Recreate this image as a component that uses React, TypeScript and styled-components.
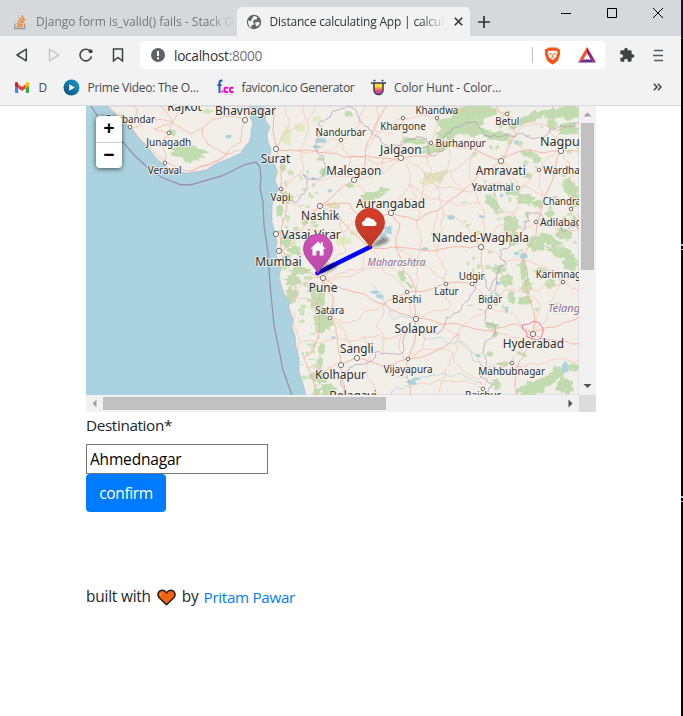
import React from 'react';
import styled, { createGlobalStyle } from 'styled-components';

const Global = createGlobalStyle`
  * { box-sizing: border-box; }
  body { margin: 0; background: #fff; font-family: "Open Sans", "Noto Sans", sans-serif; color: #212529; }
`;

/* ---------- map geometry ---------- */

type Pt = [number, number];

const noise = (n: number) => {
  const s = Math.sin(n * 127.1 + 311.7) * 43758.5453;
  return s - Math.floor(s);
};

const wobble = (pts: Pt[], seed: number, amount = 0.12): string => {
  let line = pts;
  for (let pass = 0; pass < 3; pass++) {
    const next: Pt[] = [line[0]];
    for (let i = 1; i < line.length; i++) {
      const [ax, ay] = line[i - 1];
      const [bx, by] = line[i];
      const shift = (noise(seed * 13 + i * 7 + pass * 31) - 0.5) * 2 * amount;
      next.push([(ax + bx) / 2 - (by - ay) * shift, (ay + by) / 2 + (bx - ax) * shift], [bx, by]);
    }
    line = next;
  }
  return 'M' + line.map(([x, y]) => `${x.toFixed(1)} ${y.toFixed(1)}`).join('L');
};

const blob = (cx: number, cy: number, rx: number, ry: number, seed: number, tilt = 0): string => {
  const n = 22;
  const pts: string[] = [];
  for (let i = 0; i < n; i++) {
    const a = (i / n) * Math.PI * 2;
    const r = 0.55 + noise(seed * 17 + i * 3) * 0.55;
    const x = Math.cos(a) * rx * r;
    const y = Math.sin(a) * ry * r;
    pts.push(`${(cx + x).toFixed(1)} ${(cy + y + x * tilt).toFixed(1)}`);
  }
  return 'M' + pts.join('L') + 'Z';
};

const parse = (s: string): Pt[] => s.split(' ').map(p => p.split(',').map(Number) as Pt);

const COAST = 'M264 106L266 112L265 120L270 127L267 134L268 142L271 149L270 156L274 163L277 170L275 181L279 189L274 197L272 206L272 222L274 229L277 243L275 250L277 259L281 267L279 277L282 288L285 296L289 301L289 309L293 319L292 327L295 336L296 346L299 358L299 372L303 384L306 395H579V106Z';

const forests: [number, number, number, number, number?][] = [
  [295, 30, 16, 12], [650, 45, 95, 36, -0.15], [560, 130, 55, 16, -0.2], [600, 80, 55, 28, -0.4], [490, 110, 50, 12],
  [670, 80, 60, 20], [740, 95, 55, 16], [800, 60, 35, 14, -0.5], [690, 18, 60, 20], [850, 38, 45, 18, -0.3], [905, 28, 26, 20],
  [960, 25, 45, 30], [955, 75, 45, 20], [905, 62, 18, 16], [365, 275, 45, 16, -0.1], [400, 258, 18, 9], [725, 295, 26, 24, 0.5],
  [825, 285, 35, 20, 0.2], [865, 300, 18, 14], [790, 265, 24, 12], [835, 150, 26, 12], [860, 165, 16, 14], [835, 215, 16, 10],
  [960, 250, 26, 30, 0.3], [975, 285, 18, 30], [900, 330, 18, 12], [785, 360, 30, 30], [790, 405, 26, 22], [860, 420, 30, 26, 0.3],
  [900, 410, 45, 18, 0.3], [930, 445, 50, 20, 0.3], [940, 390, 30, 22], [960, 480, 36, 22], [975, 355, 20, 24], [205, 590, 30, 50],
  [220, 655, 34, 36], [190, 560, 26, 18], [130, 530, 32, 18], [125, 575, 22, 28], [150, 500, 36, 16], [110, 410, 20, 30],
  [135, 440, 24, 16], [105, 475, 14, 26], [90, 320, 12, 24], [110, 280, 24, 20], [185, 415, 16, 16], [215, 735, 12, 24],
  [210, 775, 12, 20], [205, 820, 30, 22], [235, 855, 32, 26], [200, 865, 14, 14], [455, 515, 14, 20, 0.9], [480, 545, 14, 8, 0.8],
  [500, 478, 32, 12], [745, 495, 26, 16], [770, 530, 26, 22], [820, 500, 14, 35], [830, 545, 20, 24], [825, 590, 26, 16],
  [785, 580, 14, 24, 0.4], [870, 500, 24, 10], [900, 540, 20, 16], [725, 665, 26, 12], [735, 690, 10, 14], [720, 750, 10, 10],
  [855, 850, 60, 28, -0.25], [905, 820, 42, 22, -0.5], [945, 845, 32, 30], [925, 800, 24, 16], [740, 840, 16, 18, 0.4],
  [970, 790, 24, 14], [760, 780, 22, 7], [815, 750, 20, 6, 0.4], [100, 190, 10, 14], [75, 205, 8, 18], [220, 205, 12, 16],
  [210, 165, 14, 7], [165, 355, 12, 10], [300, 245, 14, 8],
];
const scrub: [number, number, number, number][] = [
  [555, 220, 40, 20], [530, 235, 25, 10], [280, 410, 26, 18], [250, 305, 24, 12], [150, 70, 26, 16], [110, 95, 20, 36],
  [580, 205, 18, 8], [315, 385, 18, 10], [200, 45, 16, 12],
];
const lakes: [number, number, number, number][] = [
  [215, 110, 20, 10], [200, 128, 14, 7], [415, 378, 14, 16], [400, 395, 12, 12], [375, 565, 16, 7], [390, 577, 14, 8], [485, 835, 18, 10],
  [500, 825, 14, 5], [605, 340, 12, 9], [695, 338, 12, 6], [820, 455, 16, 11], [800, 448, 9, 7], [770, 618, 7, 14], [525, 435, 12, 6],
  [800, 115, 10, 8], [745, 538, 10, 6], [755, 275, 6, 7], [745, 575, 6, 6], [685, 755, 10, 6], [945, 790, 12, 20], [265, 340, 8, 8],
  [415, 800, 4, 10], [240, 260, 8, 6], [190, 225, 8, 5], [250, 700, 10, 4], [550, 390, 8, 5],
];

const trunkRoads = [
  '75,6 70,60 78,134 92,180 96,260 110,300 100,350 90,400 95,440 130,475 219,522',
  '98,440 140,400 170,350 210,306 255,270 312,228 345,190 348,130 372,80 395,30 410,6',
  '78,134 140,140 220,145 280,160 350,155 453,162 530,160 600,125 680,135 753,171',
  '753,171 820,140 933,140 987,145', '753,171 800,90 770,50 740,6',
  '219,522 300,560 400,600 498,645 590,660 720,680 800,660 849,690',
  '219,522 250,580 245,640 262,700 273,780 285,870', '219,522 200,600 210,660 190,740 160,760 200,873',
  '210,306 260,340 300,380 355,430 420,430 560,440 692,428',
  '423,326 450,360 440,430 460,500 498,560 498,645 474,765 480,873',
  '210,306 300,300 330,340 423,326 500,350 560,320 640,260 753,171',
  '933,140 910,220 870,330 858,400 820,460 830,560 850,620 849,690 810,770 800,873',
  '849,690 900,670 987,640', '849,690 930,710 987,720', '120,760 140,850 150,873',
  '273,780 321,762 400,790 474,765 560,740 626,690', '692,428 700,500 666,540 587,540 471,564 400,600',
];
const lesserRoads = [
  '78,134 100,90 150,60 200,6', '78,134 120,60 110,6', '160,6 175,70 150,140 160,200 96,260', '220,145 272,108 330,60 350,6',
  '272,108 300,160 312,228', '312,228 345,290 423,326', '312,228 400,210 453,162 460,100 459,42', '453,162 480,240 440,290 423,326',
  '453,162 520,200 560,250 640,260', '459,42 560,42 650,20 771,30', '560,42 543,117 530,160', '459,42 400,80 348,130', '600,125 590,200 560,250 580,330 560,440',
  '680,135 660,220 690,300 692,428', '753,171 803,251 867,198 933,140', '803,251 790,330 692,428', '803,251 870,270 963,314', '803,251 720,240 640,260',
  '753,171 790,220 803,251', '933,140 960,220 963,314 987,350', '867,198 880,270 858,354', '858,354 780,380 692,428', '858,354 930,390 987,380',
  '210,306 170,330 130,300 96,260', '210,306 215,400 219,522', '130,475 170,420 210,306', '273,340 290,440 219,522', '355,430 340,500 219,522',
  '355,430 400,500 471,564', '423,326 500,280 480,240', '500,350 510,430 498,560', '580,330 640,360 692,428', '440,430 520,480 587,540',
  '560,440 590,500 587,540 600,610 498,645', '666,540 720,609 849,690', '720,609 626,690 600,770 560,873', '692,428 760,470 840,470 938,535',
  '938,535 900,600 849,690', '938,535 987,480', '849,690 785,777 700,790 626,690', '785,777 698,855', '785,777 870,780 987,770',
  '474,765 600,740 640,800 698,855', '498,645 430,700 340,700 262,700', '240,641 320,650 400,600', '240,641 200,600 120,570', '240,641 290,700 321,762',
  '498,645 520,720 474,765', '498,645 450,740 474,765', '340,700 360,760 380,873', '273,780 230,800 170,790', '150,720 200,715 262,700', '219,522 150,550 110,600 140,680 135,760',
  '400,600 380,670 400,750', '219,522 320,500 440,500', '471,564 498,645', '312,228 240,220 190,240', '480,240 540,290 600,290 690,300', '300,160 380,180 453,162',
  '530,160 545,200 520,260 500,350', '272,108 200,140 140,140', '771,30 850,60 987,60', '820,140 780,100 850,60', '933,140 900,80 910,6', '960,220 987,200',
  '849,690 800,700 720,680', '626,690 560,660', '830,560 900,540 987,560', '720,609 760,560 830,560', '400,210 410,120', '640,260 600,200 680,135', '330,340 290,380 215,400',
  '698,855 600,830 480,850', '180,600 240,641', '95,440 140,520 130,600', '380,6 372,80 430,90', '650,20 670,90 680,135', '720,240 740,330 790,330', '560,320 550,380 560,440', '849,690 870,600 830,560',
];
const stateBorders = [
  '290,8 240,40 205,60 215,95 200,140 225,180 200,225 160,210 165,260 140,295 90,265',
  '290,8 320,20 340,60 390,100 470,108 530,110 535,150 580,140 605,75 680,55 720,100 820,90 900,75 987,55',
  '280,873 290,800 340,780 375,745 460,745 465,690 510,680 565,690 590,640 640,600 680,540 700,510 720,560 740,520 770,480 750,440 790,400 825,375 830,325 870,330 900,350 987,375',
  '740,520 715,610 710,660 735,670 705,720 710,770 690,820 725,840 710,873',
];
const rivers = ['440,820 485,840 540,815 620,810 698,840', '360,540 400,585 498,660', '520,700 600,720 698,790', '425,870 440,850 485,840'];
const peninsulaRoads = [
  '75,6 138,69 200,130 242,175 310,200 400,170 470,140', '138,69 190,50 265,55 300,6', '265,55 255,87 235,120 242,175',
  '265,55 320,90 355,75 390,45 483,48', '355,75 370,120 430,150 470,115 483,48', '138,69 160,20 150,6', '230,6 265,55 210,75 255,87',
  '430,150 320,205', '483,48 500,6',
];

/* name, x, baseline, width, size, dot x, dot y, dot radius */
type Town = [string, number, number, number, number, number, number, number];
const towns: Town[] = [
  ['Rajkot', 167.3, 110.7, 34.5, 12.5, 0, 0, 0], ['Bhavnagar', 215, 115, 61, 12.5, 245, 120, 2.6],
  ['Porbandar', 106, 122.6, 49, 10.4, 130, 127, 1.8], ['Junagadh', 146.3, 145.8, 45, 10.4, 169, 133, 1.8],
  ['Veraval', 147.7, 173.8, 34, 10.4, 165, 163, 1.8], ['Nandurbar', 315.5, 136.2, 50.5, 10.4, 341, 140, 1.8],
  ['Khargone', 380.3, 129.6, 45.4, 10.4, 403, 118, 1.8], ['Jalgaon', 380, 153.5, 41.7, 12.5, 401, 158, 2.6],
  ['Surat', 260.8, 163, 29.4, 12.5, 276, 149, 2.6], ['Malegaon', 326.3, 174.8, 55, 12.5, 354, 180, 2.6],
  ['Vapi', 270.5, 200.5, 20, 10.4, 281, 189, 1.8], ['Nashik', 301, 219.8, 38, 12.5, 320, 206, 2.6],
  ['Aurangabad', 356, 207.8, 69, 12.5, 391, 213, 2.6], ['Vasai-Virar', 281.3, 238.6, 59.5, 12.5, 276, 234, 2.6],
  ['Mumbai', 255.3, 265.6, 46.4, 12.5, 279, 251, 2.6], ['Pune', 308.8, 291.6, 28.6, 12.5, 323, 278, 2.6],
  ['Satara', 315.3, 314, 29, 10.4, 330, 318, 1.8], ['Barshi', 392, 302.8, 29.4, 10.4, 407, 292, 1.8],
  ['Solapur', 394.5, 333, 43.2, 12.5, 416, 319, 2.6], ['Sangli', 340, 352.8, 33.5, 12.5, 357, 358, 2.6],
  ['Kolhapur', 315, 379, 51, 12.5, 341, 365, 2.6], ['Vijayapura', 383.5, 372.8, 49, 10.4, 408, 359, 1.8],
  ['Belagavi', 329.3, 399.5, 47.4, 12.5, 0, 0, 0], ['Khandwa', 415.4, 113.6, 43, 10.4, 437, 118, 1.8],
  ['Betul', 495.3, 125, 24, 10.4, 507, 114, 1.8], ['Burhanpur', 435.6, 146.6, 50, 10.4, 431, 143, 1.8],
  ['Nagpur', 540, 146, 45, 12.5, 561, 151, 2.6], ['Amravati', 475.7, 175, 50, 12.5, 501, 161, 2.6],
  ['Wardha', 543.3, 174, 36.5, 10.4, 539, 170, 1.8], ['Yavatmal', 471.7, 191.2, 41.7, 10.4, 518, 188, 1.8],
  ['Chandrapur', 542.8, 205, 54, 10.4, 571, 209, 1.8], ['Adilabad', 540, 226, 42, 10.4, 536, 222, 1.8],
  ['Nanded-Waghala', 432, 242, 97, 12.5, 481, 247, 2.6], ['Udgir', 458.7, 280.2, 26, 10.4, 472, 284, 1.8],
  ['Latur', 434.3, 295, 24.4, 10.4, 446, 284, 1.8], ['Karimnagar', 535.7, 278.2, 55, 10.4, 563, 282, 1.8],
  ['Bidar', 478.2, 303, 24, 10.4, 490, 307, 1.8], ['Hyderabad', 502.7, 348, 61.4, 12.5, 533, 334, 2.6],
  ['Mahbubnagar', 478.3, 374.6, 66.7, 10.4, 512, 363, 1.8], ['Raichur', 465, 399, 36, 10.4, 483, 389, 1.8],
];

/* ---------- styled parts ---------- */

const Desktop = styled.div`width: 683px; height: 716px; display: flex; overflow: hidden;`;
const Shell = styled.div`width: 681px; height: 716px; flex: none; background: #fff; display: flex; flex-direction: column;`;
const Edge = styled.div`
  width: 2px;
  background: linear-gradient(to bottom,
    #1b1028 0 38px, #333 38px 39px, #000 39px 244px, #8fd0ee 244px 246px, #000 246px 249px, #bbb 249px 250px,
    #000 250px 496px, #8fd0ee 496px 498px, #000 498px 501px, #bbb 501px 502px, #000 502px);
`;
const TabStrip = styled.header`
  height: 36px; flex: none; background: #d5d9dc; display: flex; align-items: stretch; justify-content: space-between;
`;
const Tabs = styled.div`display: flex; align-items: flex-end;`;
const Tab = styled.div<{ $active?: boolean }>`
  width: ${p => (p.$active ? 233 : 237)}px; height: 29px; padding-left: ${p => (p.$active ? 9 : 14)}px;
  display: flex; align-items: center; border-radius: 5px 5px 0 0;
  background: ${p => (p.$active ? '#f2f2f2' : 'transparent')};
  & > svg { flex: none; }
`;
const TabTitle = styled.span<{ $active?: boolean }>`
  flex: none; width: ${p => (p.$active ? 175 : 199)}px; margin-left: ${p => (p.$active ? 7.5 : 10)}px; overflow: hidden; white-space: nowrap;
  font-size: 12px; line-height: 18px; letter-spacing: ${p => (p.$active ? -0.19 : 0)}px;
  color: ${p => (p.$active ? '#303336' : '#73777a')};
  mask-image: linear-gradient(to right, #000 86%, transparent);
`;
const CloseTab = styled.button`border: 0; padding: 0; margin-left: 9px; background: none; display: flex;`;
const NewTab = styled.button`border: 0; background: none; padding: 0; width: 28px; height: 29px; display: grid; place-items: center;`;
const WindowButtons = styled.div`display: flex; height: 27px; & > svg { width: 46px; height: 27px; }`;

const Toolbar = styled.div`height: 38px; flex: none; background: #f2f2f2; display: flex; align-items: center; padding: 0 17px 0 6px;`;
const NavIcon = styled.button`width: 32px; height: 32px; padding: 0; border: 0; background: none; display: grid; place-items: center;`;
const Address = styled.div`
  flex: none; margin-left: 6px; width: 465px; height: 28px; border-radius: 4px; background: #fff; display: flex; align-items: center; padding: 0 9px 0 11px;
`;
const Host = styled.span`flex: 1; margin-left: 9px; font-size: 13.7px; letter-spacing: -0.3px; color: #303336; em { font-style: normal; color: #707477; }`;
const Divider = styled.i`width: 1px; height: 16px; background: #bfc1c3; margin-right: 11px;`;
const ShieldGap = styled.span`width: 17px;`;
const Extensions = styled.div`flex: 1; margin-left: 14px; display: flex; align-items: center; justify-content: space-between;`;

const Bookmarks = styled.nav`
  height: 32px; flex: none; background: #f2f2f2; border-bottom: 1px solid #d9dadb; display: flex; align-items: center; padding: 0 0 5px 15px;
`;
const Bookmark = styled.a<{ $w: number; $gap: number; $ls: number }>`
  width: ${p => p.$w}px; display: flex; align-items: center; gap: ${p => p.$gap}px; font-size: 12px; letter-spacing: ${p => p.$ls}px;
  color: #47494c; white-space: nowrap; flex: none; height: 18px;
  & > svg { flex: none; }
`;
const More = styled.div`margin-left: auto; margin-right: 19px; display: flex;`;

const Page = styled.main`padding-left: 86px; display: flex; flex-direction: column; align-items: flex-start;`;
const MapFrame = styled.section`
  width: 510px; height: 306px; display: grid; grid-template: 289px 17px / 493px 17px; background: #dcdcdc;
`;
const MapPane = styled.div`position: relative; overflow: hidden; & > svg { display: block; }`;
const Zoom = styled.div`
  position: absolute; left: 10px; top: 10px; width: 26px; border-radius: 4px; background: #fff; box-shadow: 0 1px 5px rgba(0,0,0,.65);
`;
const ZoomButton = styled.button`
  display: block; width: 26px; height: 26px; padding: 0; border: 0; background: none; color: #000;
  font: bold 19px/26px "Liberation Mono", monospace; text-align: center;
  & + & { border-top: 1px solid #ccc; }
`;
const Scrollbar = styled.div<{ $vertical?: boolean }>`
  display: flex; flex-direction: ${p => (p.$vertical ? 'column' : 'row')}; background: #f1f1f1;
  & > svg:last-child { margin-${p => (p.$vertical ? 'top' : 'left')}: auto; }
`;
const Thumb = styled.div<{ $vertical?: boolean }>`
  background: #c1c1c1;
  ${p => (p.$vertical ? 'width: 13px; height: 147px; margin: 0 2px;' : 'height: 13px; width: 283px; margin: 2px 0;')}
`;
const Label = styled.label`margin-top: 1px; font-size: 15.3px; line-height: 24px; letter-spacing: -0.38px; color: #212529;`;
const Field = styled.input`
  margin-top: 7px; width: 182px; height: 30px; border: 1px solid #767676; padding: 1px 3px; outline: 0;
  font: 15.5px "Open Sans", sans-serif; letter-spacing: -0.18px; color: #000;
`;
const Confirm = styled.button`
  width: 80px; height: 38px; border: 0; border-radius: 4px; padding: 0; background: #007bff; color: #fff;
  font: 15.5px "Open Sans", sans-serif; letter-spacing: -0.35px;
`;
const Credit = styled.footer`
  margin-top: 73px; height: 24px; display: flex; align-items: center; font-size: 15.4px; line-height: 24px; letter-spacing: -0.2px; white-space: nowrap;
  svg { margin: 0 6px; }
`;
const Author = styled.a`color: #007bff; margin-left: 5px; font-size: 15.2px; letter-spacing: -0.3px;`;

/* ---------- drawings ---------- */

const Arrow = ({ d, fill }: { d: string; fill: string }) => (
  <svg width="17" height="17" viewBox="0 0 17 17"><path d={d} fill={fill} /></svg>
);

const Pin = ({ x, y, fill, edge }: { x: number; y: number; fill: string; edge: string }) => (
  <path transform={`translate(${x} ${y})`} d="M0 .5C-3-7-14.5-14-14.5-24.5A14.5 14.3 0 0 1 14.5-24.5C14.5-14 3-7 0 .5Z" fill={fill} stroke={edge} strokeWidth=".8" />
);

const MapDrawing = () => (
  <svg width="493" height="289" viewBox="86 106 493 289" fontFamily='"Noto Sans", "Open Sans", sans-serif'>
    <defs>
      <linearGradient id="red" x1="0" y1="0" x2="0" y2="1"><stop offset="0" stopColor="#d63e2a" /><stop offset="1" stopColor="#c03626" /></linearGradient>
      <linearGradient id="pink" x1="0" y1="0" x2="0" y2="1"><stop offset="0" stopColor="#d252b9" /><stop offset="1" stopColor="#b84aa3" /></linearGradient>
      <filter id="soft"><feGaussianBlur stdDeviation="1.6" /></filter>
      <clipPath id="mainland"><path d={COAST} /></clipPath>
    </defs>
    <rect x="86" y="106" width="493" height="289" fill="#aad3df" />
    <path d="M107 106L117 116L130 127L138 137L147 146L156 158L164 165L175 171L185 173L195 172L206 170L215 164L228 159L241 153L243 149L249 142L251 136L251 130L253 124L250 117L252 112L250 106Z" fill="#f2efe9" stroke="#a79ac0" strokeWidth=".4" />
    <path d={COAST} fill="#f2efe9" stroke="#a79ac0" strokeWidth=".4" />
    <g transform="translate(84 104) scale(.33333)">
      <path d={blob(310, 147, 62, 28, 4, 0.12)} fill="#c1dcae" />
      <path d={blob(265, 85, 13, 12, 5)} fill="#c1dcae" />
      <path d={blob(435, 98, 13, 6, 9)} fill="#aad3df" />
      <path d={blob(370, 22, 22, 8, 10)} fill="#d0e5bb" />
      <g fill="none" stroke="#f6b09c" strokeWidth="2.4" strokeOpacity=".9">
        {peninsulaRoads.map((s, i) => <path key={i} d={wobble(parse(s), i + 60)} />)}
      </g>
    </g>
    <g clipPath="url(#mainland)">
      <g transform="translate(250 104) scale(.33333)">
        {scrub.map(([x, y, rx, ry], i) => <path key={i} d={blob(x, y, rx, ry, i + 200)} fill={i % 3 ? '#e3ebc4' : '#dfe0bd'} />)}
        {forests.map(([x, y, rx, ry, t], i) => <path key={i} d={blob(x, y, rx, ry, i + 1, t)} fill="#c1dcae" />)}
        {Array.from({ length: 190 }, (_, i) => {
          const west = i < 90;
          const x = west ? 75 + noise(i) * 125 + noise(i + 900) * 20 : 640 + noise(i) * 350;
          const y = west ? 200 + noise(i + 400) * 670 : 20 + noise(i + 400) * 600;
          return <path key={i} d={blob(x, y, 4 + noise(i + 70) * 8, 3 + noise(i + 30) * 7, i + 300)} fill="#cbe2b9" />;
        })}
        {lakes.map(([x, y, rx, ry], i) => <path key={i} d={blob(x, y, rx, ry, i + 100)} fill="#aad3df" />)}
        <g fill="none" stroke="#aad3df" strokeWidth="2">
          {rivers.map((s, i) => <path key={i} d={wobble(parse(s), i + 8, 0.25)} />)}
        </g>
        <g fill="none" stroke="#f8bcab" strokeWidth="2.1" strokeOpacity=".85">
          {lesserRoads.map((s, i) => <path key={i} d={wobble(parse(s), i + 1, 0.16)} />)}
        </g>
        <g fill="none" stroke="#f6ab97" strokeWidth="2.7" strokeOpacity=".9">
          {trunkRoads.map((s, i) => <path key={i} d={wobble(parse(s), i + 40, 0.08)} />)}
        </g>
        <g fill="none" stroke="#a68bae" strokeWidth="3" strokeOpacity=".6">
          {stateBorders.map((s, i) => <path key={i} d={wobble(parse(s), i + 21, 0.26)} />)}
        </g>
        <path d="M817 662L838 660L849 652L867 656L880 674L877 690L872 703L862 708L846 704L832 699L829 684L818 675Z" fill="none" stroke="#ef809e" strokeWidth="3" />
      </g>
    </g>
    <path d="M91 106L97 115L112 132L122 141L134 155L146 166L161 177L180 184.5L190 185L222 176L245 164.5L256 162L260 167L261 178L260 188L263 202L264 225L268 253L270 284L274 325L283 370L292 395" fill="none" stroke="#9a8fb3" strokeWidth="1.3" />
    {towns.map(([name, x, y, w, size, dx, dy, r]) => (
      <g key={name}>
        {r > 0 && <circle cx={dx} cy={dy} r={r} fill="#fff" stroke="#666055" strokeWidth=".9" />}
        <text x={x} y={y} textLength={w} lengthAdjust="spacingAndGlyphs" fontSize={size} fill="#2e2e2e" stroke="#f8f6f2" strokeWidth="2" strokeOpacity=".8" strokeLinejoin="round" paintOrder="stroke">{name}</text>
      </g>
    ))}
    <g fontStyle="italic" fontSize="10.4" fill="#8d6a94" stroke="#f8f6f2" strokeWidth="1.6" paintOrder="stroke">
      <text x="367.5" y="265.5" textLength="58" lengthAdjust="spacingAndGlyphs">Maharashtra</text>
      <text x="548" y="312" textLength="51" lengthAdjust="spacingAndGlyphs">Telangana</text>
    </g>
    <path d="M317.5 273L370 247" stroke="#00f" strokeWidth="4.5" strokeLinecap="round" />
    <path d="M370 247L379 239Q390 236 389 240Q384 246 370 247Z" fill="#222" opacity=".5" filter="url(#soft)" />
    <path d="M318 273L326 265Q337 262 337 266Q331 272 318 273Z" fill="#001" opacity=".5" filter="url(#soft)" />
    <Pin x={370} y={247} fill="url(#red)" edge="#b13424" />
    <Pin x={318} y={273} fill="url(#pink)" edge="#ad3f98" />
    <path d="M364.500 226a2.500 2.500 0 0 1-.2-5a3.900 3.900 0 0 1 7-2a2.900 2.900 0 0 1 3.600 2.500a2.300 2.300 0 0 1-.1 4.500Z" fill="#fff" />
    <path d="M318 241.500L310.300 248.700H312.500V255.500H316.300V250.800H319.700V255.500H323.500V248.700H325.700L322.800 246V242.300H320.900V244.200Z" fill="#fff" />
  </svg>
);

export default function App() {
  return (
    <Desktop>
      <Global />
      <Shell>
        <TabStrip>
          <Tabs>
            <Tab>
              <svg width="12" height="16" viewBox="0 0 12 16" fill="none"><path d="M.8 9.500v5h9.800v-5" stroke="#97999b" strokeWidth="1.300" /><path d="M2.600 12.300h6M2.800 9.800l6 .8M3.500 6.800l5.700 2M4.800 4l4.900 3.600M7.500 1.500l3.200 5" stroke="#f48024" strokeWidth="1.400" /></svg>
              <TabTitle>Django form is_valid() fails - Stack Overflow</TabTitle>
            </Tab>
            <Tab $active>
              <svg width="16" height="16" viewBox="0 0 16 16"><circle cx="8" cy="8" r="7.200" fill="#5f6368" /><path d="M2 6.500l4 .8 2 2-.3 1.500-2 .5-.5 2.500C3 12.500 1.800 10 2 6.500ZM8 1.800l3.500 1.400-1 2.300-2.500.3L7 8 5 6.800 6 4.500ZM9 8.500l3-.7 1.900 1-1.200 2.500L10 12.500Z" fill="#f2f2f2" /></svg>
              <TabTitle $active>Distance calculating App | calculation</TabTitle>
              <CloseTab><svg width="9" height="9" viewBox="0 0 9 9"><path d="M.8.8l7.400 7.400M8.200.8L.8 8.200" stroke="#333" strokeWidth="1.600" /></svg></CloseTab>
            </Tab>
            <NewTab><svg width="12" height="12" viewBox="0 0 12 12"><path d="M6 0v12M0 6h12" stroke="#333" strokeWidth="1.700" /></svg></NewTab>
          </Tabs>
          <WindowButtons>
            <svg viewBox="0 0 46 27"><path d="M18 13.500h10" stroke="#000" /></svg>
            <svg viewBox="0 0 46 27"><path d="M18.500 8.500h9v9h-9Z" fill="none" stroke="#000" /></svg>
            <svg viewBox="0 0 46 27"><path d="M18 8l10 10M28 8L18 18" stroke="#000" /></svg>
          </WindowButtons>
        </TabStrip>
        <Toolbar>
          <NavIcon><svg width="12" height="14" viewBox="0 0 12 14"><path d="M10.300 1.200v11.600L1 7Z" fill="none" stroke="#3f4246" strokeWidth="1.500" strokeLinejoin="round" /></svg></NavIcon>
          <NavIcon><svg width="12" height="14" viewBox="0 0 12 14"><path d="M1.500 1.200v11.600L10.800 7Z" fill="none" stroke="#bcbec0" strokeWidth="1.300" strokeLinejoin="round" /></svg></NavIcon>
          <NavIcon><svg width="14" height="14" viewBox="0 0 14 14"><path d="M12.500 8.500A5.800 5.800 0 1 1 11 3" fill="none" stroke="#3f4246" strokeWidth="1.600" /><circle cx="11.600" cy="3.300" r="2" fill="#3f4246" /></svg></NavIcon>
          <NavIcon><svg width="12" height="14" viewBox="0 0 12 14"><path d="M1.500 1h9v12L6 9.500 1.500 13Z" fill="none" stroke="#3f4246" strokeWidth="1.500" /></svg></NavIcon>
          <Address>
            <svg width="14" height="14" viewBox="0 0 14 14"><circle cx="7" cy="7" r="7" fill="#5f6368" /><path d="M6 3h2v5H6ZM6 9.300h2v2H6Z" fill="#fff" /></svg>
            <Host>localhost<em>:8000</em></Host>
            <Divider />
            <svg width="17" height="19" viewBox="0 0 17 19"><path d="M4.500 1.500h8l1.300 1.300 1.700.2.800 2.200-.6 1.600.4 1.300-2 6.200c-1 1.500-3.300 3-5.600 4.200-2.300-1.200-4.600-2.700-5.600-4.200L.9 8.100l.4-1.300L.7 5.200 1.500 3l1.700-.2Z" fill="#f95116" /><path d="M4.800 4.600l2 .4 1.700-.4 1.700.4 2-.4 1.500 2.200-1.500 3 .2 1.200-2 1.500L8.500 14.200 6.600 12.500l-2-1.500.2-1.200-1.500-3Z" fill="#fff" /><path d="M4.800 7l2.400.7-.4 1.500M12.200 7l-2.400.7.4 1.500M8.500 8.500v2.500M6.800 12l1.700-.9 1.700.9" stroke="#f95116" fill="none" strokeWidth=".8" /></svg>
            <ShieldGap />
            <svg width="18" height="16" viewBox="0 0 18 16"><path d="M9 0L0 15.500 5.200 12.500 9 6Z" fill="#ff4724" /><path d="M9 0L18 15.500 12.800 12.500 9 6Z" fill="#9e1f63" /><path d="M0 15.500H18L12.800 12.500H5.200Z" fill="#662d91" /></svg>
          </Address>
          <Extensions>
            <svg width="16" height="16" viewBox="0 0 24 24"><path d="M20.500 11H19V7a2 2 0 0 0-2-2h-4V3.500a2.500 2.500 0 0 0-5 0V5H4a2 2 0 0 0-2 2v3.800h1.500a2.700 2.700 0 0 1 0 5.400H2V20a2 2 0 0 0 2 2h3.800v-1.500a2.700 2.700 0 0 1 5.400 0V22H17a2 2 0 0 0 2-2v-4h1.500a2.500 2.500 0 0 0 0-5Z" fill="#3f4246" /></svg>
            <svg width="11" height="13" viewBox="0 0 11 13"><path d="M1 1.500h9M0 6.500h10M1 11.500h9" stroke="#55585b" strokeWidth="1.500" /></svg>
          </Extensions>
        </Toolbar>
        <Bookmarks>
          <Bookmark $w={47.500} $gap={9.500} $ls={0}>
            <svg width="14" height="11" viewBox="0 0 14 11"><path d="M0 1.500V10a1 1 0 0 0 1 1h2.200V4Z" fill="#4285f4" /><path d="M14 1.500V10a1 1 0 0 1-1 1h-2.200V4Z" fill="#34a853" /><path d="M3.200 2.200L7 5l3.800-2.800v4L7 9 3.200 6.200Z" fill="#ea4335" /><path d="M0 1.500C0 .2 1.500-.3 2.400.5l.8.7v5L0 3.800Z" fill="#c5221f" /><path d="M14 1.500C14 .2 12.500-.3 11.600.5l-.8.7v5L14 3.800Z" fill="#fbbc04" /></svg>
            D
          </Bookmark>
          <Bookmark $w={154} $gap={8} $ls={-0.26}>
            <svg width="17" height="17" viewBox="0 0 17 17"><defs><linearGradient id="prime" x1="0" y1="1" x2="1" y2="0"><stop offset="0" stopColor="#0b4a78" /><stop offset="1" stopColor="#1aa0d0" /></linearGradient></defs><circle cx="8.500" cy="8.500" r="8" fill="url(#prime)" /><path d="M6.300 5.300v6.400L11.800 8.500Z" fill="#fff" /></svg>
            Prime Video: The O...
          </Bookmark>
          <Bookmark $w={154} $gap={8} $ls={-0.33}>
            <svg width="17" height="17" viewBox="0 0 17 17" fill="none"><path d="M5.500 1.800C3 1 2.500 2.500 2.500 4v10M.5 6h4" stroke="#2459b5" strokeWidth="2" /><path d="M4.500 11.500h1.500v2H4.500Z" fill="#f0c" /><path d="M11 8.700H8.500q-1 0-1 1v2.300q0 1 1 1H11M16.500 8.700H14q-1 0-1 1v2.300q0 1 1 1h2.500" stroke="#f0c" strokeWidth="1.900" /><path d="M7.500 15.500h3.500M13 15.500h3" stroke="#f8b6e8" /></svg>
            favicon.ico Generator
          </Bookmark>
          <Bookmark $w={140} $gap={8.500} $ls={-0.16}>
            <svg width="15" height="17" viewBox="0 0 15 17"><path d="M3 4.500h9V11a4.500 4.500 0 0 1-9 0Z" fill="#ffe22b" /><path d="M3 8.500h9v2H3Z" fill="#fb8c3c" /><path d="M3 10.500h9a4.500 4.500 0 0 1-9 0Z" fill="#e0439a" /><path d="M0 4h15M3 4.500V11a4.500 4.500 0 0 0 9 0V4.500" fill="none" stroke="#303a55" strokeWidth="1.500" /><path d="M2.500 1.500h2M10.500 1.500h2" stroke="#303a55" strokeWidth="1.600" /></svg>
            Color Hunt - Color...
          </Bookmark>
          <More><svg width="9" height="8" viewBox="0 0 9 8"><path d="M.8.8L4 4 .8 7.200M4.800.8L8 4 4.800 7.200" fill="none" stroke="#3f4246" strokeWidth="1.500" /></svg></More>
        </Bookmarks>
        <Page>
          <MapFrame>
            <MapPane>
              <MapDrawing />
              <Zoom><ZoomButton>+</ZoomButton><ZoomButton>−</ZoomButton></Zoom>
            </MapPane>
            <Scrollbar $vertical>
              <Arrow d="M4.500 10.500L8.500 6.500L12.500 10.500Z" fill="#a3a3a3" /><Thumb $vertical /><Arrow d="M4.500 6L12.500 6L8.500 10Z" fill="#505050" />
            </Scrollbar>
            <Scrollbar>
              <Arrow d="M10.500 4.500V12.500L6.500 8.500Z" fill="#a3a3a3" /><Thumb /><Arrow d="M6.500 4.500V12.500L10.500 8.500Z" fill="#505050" />
            </Scrollbar>
          </MapFrame>
          <Label>Destination*</Label>
          <Field defaultValue="Ahmednagar" />
          <Confirm>confirm</Confirm>
          <Credit>
            built with
            <svg width="19" height="17" viewBox="0 0 19 17"><path d="M9.500 15.800L2 8.500C.2 6.300.8 3 3 1.800 5.500.6 8 1.500 9.500 3.800 11 1.500 13.500.6 16 1.800 18.200 3 18.800 6.300 17 8.500Z" fill="#f7630c" stroke="#1a1a1a" strokeWidth="1.500" strokeLinejoin="round" /><path d="M3.500 6.500Q3.300 4 5.500 3.500" fill="none" stroke="#ff9a5c" /></svg>
            by
            <Author>Pritam Pawar</Author>
          </Credit>
        </Page>
      </Shell>
      <Edge />
    </Desktop>
  );
}
